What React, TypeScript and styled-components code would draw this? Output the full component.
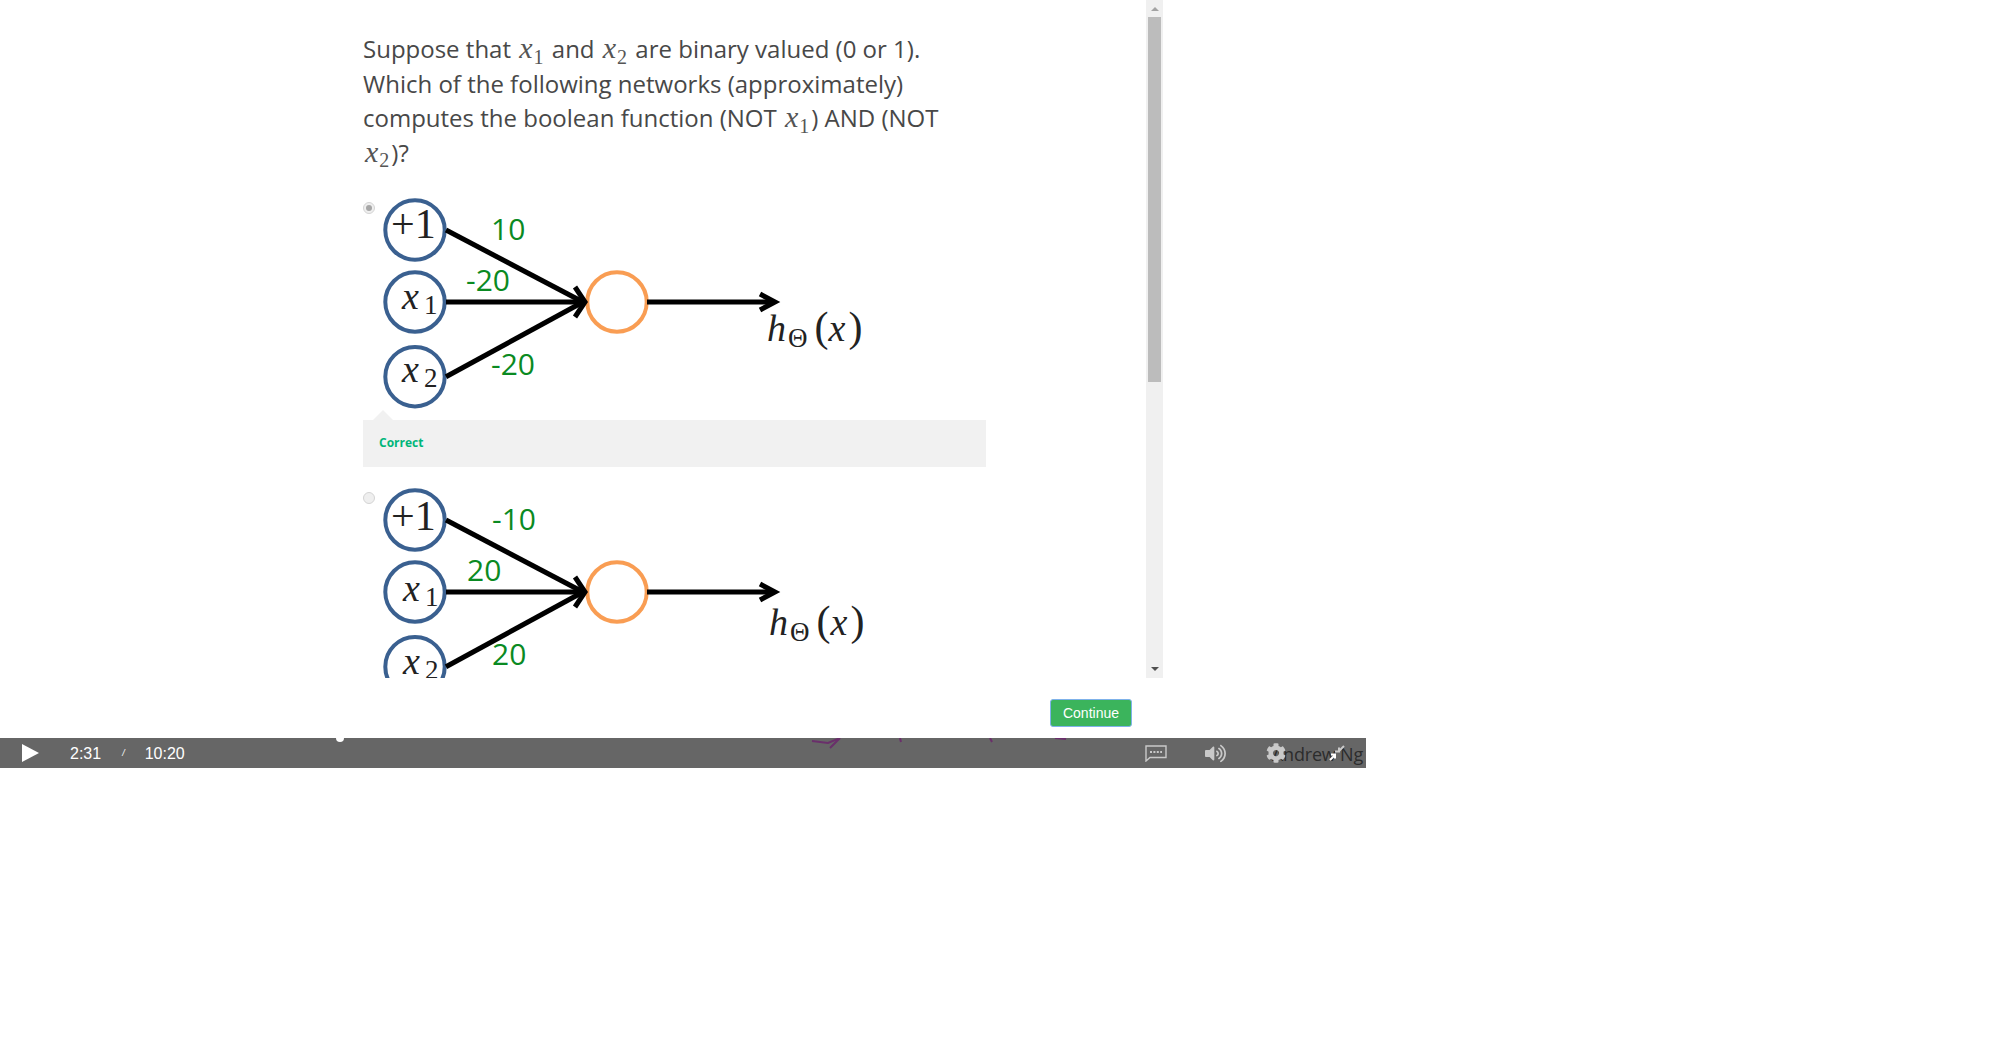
import * as React from 'react';
import styled, { createGlobalStyle } from 'styled-components';
import { FaCog, FaVolumeUp } from 'react-icons/fa';

const GlobalStyle = createGlobalStyle`
  html, body {
    margin: 0;
    padding: 0;
    background: #fff;
    font-family: "Open Sans", sans-serif;
  }
`;

const Page = styled.div`
  width: 1366px;
`;

const QuizFrame = styled.div`
  width: 1163px;
  height: 678px;
  display: flex;
  overflow: hidden;
`;

const QuizScroll = styled.div`
  flex: 1;
  padding: 32px 0 0 363px;
  overflow: hidden;
`;

const Question = styled.p`
  width: 590px;
  height: 138px;
  margin: 0 0 25px;
  font-size: 24px;
  line-height: 34.5px;
  color: #484848;
`;

const MathVar = styled.span`
  font-family: "Liberation Serif", serif;
  font-style: italic;
  font-size: 30px;
  line-height: 0;
  margin: 0 1px 0 2px;
  color: #555;
`;

const MathSub = styled.sub`
  font-family: "Liberation Serif", serif;
  font-size: 20px;
  line-height: 0;
  margin-right: 2px;
  color: #555;
`;

const Option = styled.div`
  display: flex;
  align-items: flex-start;
  gap: 5px;
`;

const Radio = styled.span<{ $checked?: boolean }>`
  flex: none;
  width: 12px;
  height: 12px;
  margin-top: 7px;
  border-radius: 50%;
  border: 1px solid #d4d4d4;
  background: #efefef;
  box-sizing: border-box;
  display: flex;
  align-items: center;
  justify-content: center;

  &::after {
    content: '';
    display: ${p => (p.$checked ? 'block' : 'none')};
    width: 6px;
    height: 6px;
    border-radius: 50%;
    background: #a6a6a6;
  }
`;

const Feedback = styled.div`
  position: relative;
  width: 623px;
  height: 47px;
  margin: 11px 0 18px;
  background: #f1f1f1;
  display: flex;
  align-items: center;
  padding: 0 0 2px 16px;
  box-sizing: border-box;
  font-size: 12px;
  font-weight: 700;
  color: #00b67a;

  &::before {
    content: '';
    position: absolute;
    top: -10px;
    left: 10px;
    border-left: 10px solid transparent;
    border-right: 10px solid transparent;
    border-bottom: 10px solid #f1f1f1;
  }
`;

const Scrollbar = styled.div`
  flex: none;
  width: 17px;
  height: 678px;
  background: #f0f0f0;
  display: flex;
  flex-direction: column;
  align-items: center;
  padding: 7px 0;
  box-sizing: border-box;
`;

const ScrollThumb = styled.div`
  width: 13px;
  height: 365px;
  margin-top: 6px;
  background: #bcbcbc;
`;

const ScrollArrow = styled.span<{ $down?: boolean }>`
  width: 0;
  height: 0;
  border-left: 4px solid transparent;
  border-right: 4px solid transparent;
  ${p => (p.$down ? 'border-top: 4px solid #505050; margin-top: auto;' : 'border-bottom: 4px solid #a3a3a3;')}
`;

const ActionRow = styled.div`
  height: 60px;
  padding: 21px 0 0 1050px;
  box-sizing: border-box;
`;

const ContinueButton = styled.button`
  display: block;
  width: 82px;
  height: 28px;
  padding: 0;
  border: 1px solid #7fb2ea;
  border-radius: 3px;
  background: #3bb45c;
  color: #fff;
  font-family: "Liberation Sans", sans-serif;
  font-size: 14px;
`;

const ControlBar = styled.div`
  position: relative;
  height: 30px;
  background: #666;
  display: flex;
  align-items: center;
  padding: 0 2px 0 22px;
  color: #fff;
  font-family: "Liberation Sans", sans-serif;
  font-size: 16px;
`;

const PlayIcon = styled.span`
  width: 0;
  height: 0;
  border-left: 17px solid #fff;
  border-top: 9px solid transparent;
  border-bottom: 9px solid transparent;
  margin-right: 31px;
`;

const TimeText = styled.span`
  padding-top: 1px;
`;

const Sep = styled.span`
  margin: 0 20px 0 21px;
  font-size: 9px;
  font-style: italic;
`;

const ScrubKnob = styled.span`
  position: absolute;
  top: -3px;
  left: 336px;
  width: 8px;
  height: 7px;
  border-radius: 0 0 5px 5px;
  background: #fff;
`;

const VideoInk = styled.svg`
  position: absolute;
  top: 0;
  left: 800px;
`;

const Presenter = styled.span`
  position: absolute;
  right: 3px;
  top: 4px;
  font-family: "Open Sans", sans-serif;
  font-size: 18px;
  color: #2c2c2c;
  letter-spacing: -0.2px;
`;

const RightControls = styled.div`
  position: relative;
  margin-left: auto;
  display: flex;
  align-items: center;
  color: #c9c9c9;
`;

const CaptionIcon = styled.svg`
  margin-right: 38px;
`;

const VolumeIcon = styled(FaVolumeUp)`
  margin-right: 40px;
  font-size: 21px;
`;

const GearIcon = styled(FaCog)`
  margin-right: 43px;
  font-size: 20px;
`;

const ShrinkIcon = styled.svg`
  margin-right: 19px;
`;

const DiagramSvg = styled.svg`
  display: block;
  flex: none;
`;

const DiagramLabel = styled.text`
  font-family: "Open Sans", sans-serif;
  font-size: 30px;
  fill: #0a8a22;
`;

const NodeText = styled.text`
  font-family: "Liberation Serif", serif;
  font-size: 38px;
  fill: #222;
`;

const PlusText = styled(NodeText)`
  font-size: 42px;
`;

const NodeVar = styled.tspan`
  font-style: italic;
`;

const NodeSub = styled.tspan`
  font-size: 27px;
`;

const ThetaSub = styled.tspan`
  font-size: 27px;
`;

const Paren = styled.tspan`
  font-size: 42px;
`;

type Label = { text: string; x: number; y: number };

type NetworkProps = {
  labels: Label[];
  outputX: number;
  outputY: number;
  plusX: number;
  plusY: number;
  varX: number;
  varShift: number;
};

function Network({ labels, outputX, outputY, plusX, plusY, varX, varShift }: NetworkProps) {
  return (
    <DiagramSvg width={500} height={214} viewBox="380 195 500 214">
      <g fill="none" stroke="#3a6090" strokeWidth={4}>
        <circle cx={415} cy={230} r={29.7} />
        <circle cx={415} cy={302} r={29.7} />
        <circle cx={415} cy={376.7} r={29.7} />
      </g>
      <circle cx={617} cy={302} r={29.7} fill="none" stroke="#f99d53" strokeWidth={4} />
      <g fill="none" stroke="#000" strokeWidth={5}>
        <line x1={446} y1={230} x2={583} y2={302} />
        <line x1={446} y1={302} x2={583} y2={302} />
        <line x1={446} y1={376.7} x2={583} y2={302} />
        <line x1={647} y1={302} x2={774} y2={302} />
        <polyline points="575,287 585,302 575,317" />
        <polyline points="760,294 775,302 760,310" />
      </g>
      <PlusText x={391} y={plusY}>+1</PlusText>
      <NodeText x={varX} y={309 + varShift}>
        <NodeVar>x</NodeVar>
        <NodeSub dx={5} dy={5}>1</NodeSub>
      </NodeText>
      <NodeText x={varX} y={382 + varShift}>
        <NodeVar>x</NodeVar>
        <NodeSub dx={5} dy={5}>2</NodeSub>
      </NodeText>
      {labels.map(l => (
        <DiagramLabel key={l.x} x={l.x} y={l.y}>{l.text}</DiagramLabel>
      ))}
      <NodeText x={outputX} y={outputY}>
        <NodeVar>h</NodeVar>
        <ThetaSub dx={2} dy={6}>Θ</ThetaSub>
        <Paren dx={7} dy={-6}>(</Paren>
        <NodeVar>x</NodeVar>
        <Paren dx={3}>)</Paren>
      </NodeText>
    </DiagramSvg>
  );
}

function MathX({ n }: { n: number }) {
  return (
    <>
      <MathVar>x</MathVar>
      <MathSub>{n}</MathSub>
    </>
  );
}

export default function App() {
  return (
    <>
      <GlobalStyle />
      <Page>
        <QuizFrame>
          <QuizScroll>
            <Question>
              Suppose that <MathX n={1} /> and <MathX n={2} /> are binary valued (0 or 1). Which of the following networks (approximately) computes the boolean function (NOT <MathX n={1} />) AND (NOT <MathX n={2} />)?
            </Question>
            <Option>
              <Radio $checked />
              <Network
                plusY={238}
                varX={402}
                varShift={0}
                outputX={767}
                outputY={341}
                plusX={391}
                labels={[
                  { text: '10', x: 491, y: 240 },
                  { text: '-20', x: 466, y: 291 },
                  { text: '-20', x: 491, y: 375 },
                ]}
              />
            </Option>
            <Feedback>Correct</Feedback>
            <Option>
              <Radio />
              <Network
                plusY={240}
                varX={403}
                varShift={2}
                outputX={769}
                outputY={345}
                plusX={394}
                labels={[
                  { text: '-10', x: 492, y: 240 },
                  { text: '20', x: 467, y: 291 },
                  { text: '20', x: 492, y: 375 },
                ]}
              />
            </Option>
          </QuizScroll>
          <Scrollbar>
            <ScrollArrow />
            <ScrollThumb />
            <ScrollArrow $down />
          </Scrollbar>
        </QuizFrame>
        <ActionRow>
          <ContinueButton>Continue</ContinueButton>
        </ActionRow>
        <ControlBar>
          <ScrubKnob />
          <VideoInk width={270} height={12} viewBox="0 0 270 12">
            <g fill="none" stroke="#6a2f6b" strokeWidth={2}>
              <path d="M12 3 L28 5 L40 0 L30 10" />
              <path d="M100 0 L101 4" />
              <path d="M190 0 L192 4" />
              <path d="M255 0 L266 1" />
            </g>
          </VideoInk>
          <PlayIcon />
          <TimeText>2:31</TimeText>
          <Sep>/</Sep>
          <TimeText>10:20</TimeText>
          <Presenter>Andrew Ng</Presenter>
          <RightControls>
            <CaptionIcon width={22} height={17} viewBox="0 0 22 17">
              <path d="M1 1 H21 V12.5 H5 L1 16 Z" fill="none" stroke="currentColor" strokeWidth={1.4} />
              <path d="M5 7 H17" stroke="currentColor" strokeWidth={2} strokeDasharray="2 1.4" />
            </CaptionIcon>
            <VolumeIcon />
            <GearIcon />
            <ShrinkIcon width={16} height={16} viewBox="0 0 16 16">
              <path d="M15 1 L10 6 M6 6.5 H10 V2.5" fill="none" stroke="currentColor" strokeWidth={2} />
              <path d="M1 15 L6 10 M2 9.5 H6 V13.5" fill="none" stroke="#fff" strokeWidth={2} />
            </ShrinkIcon>
          </RightControls>
        </ControlBar>
      </Page>
    </>
  );
}
